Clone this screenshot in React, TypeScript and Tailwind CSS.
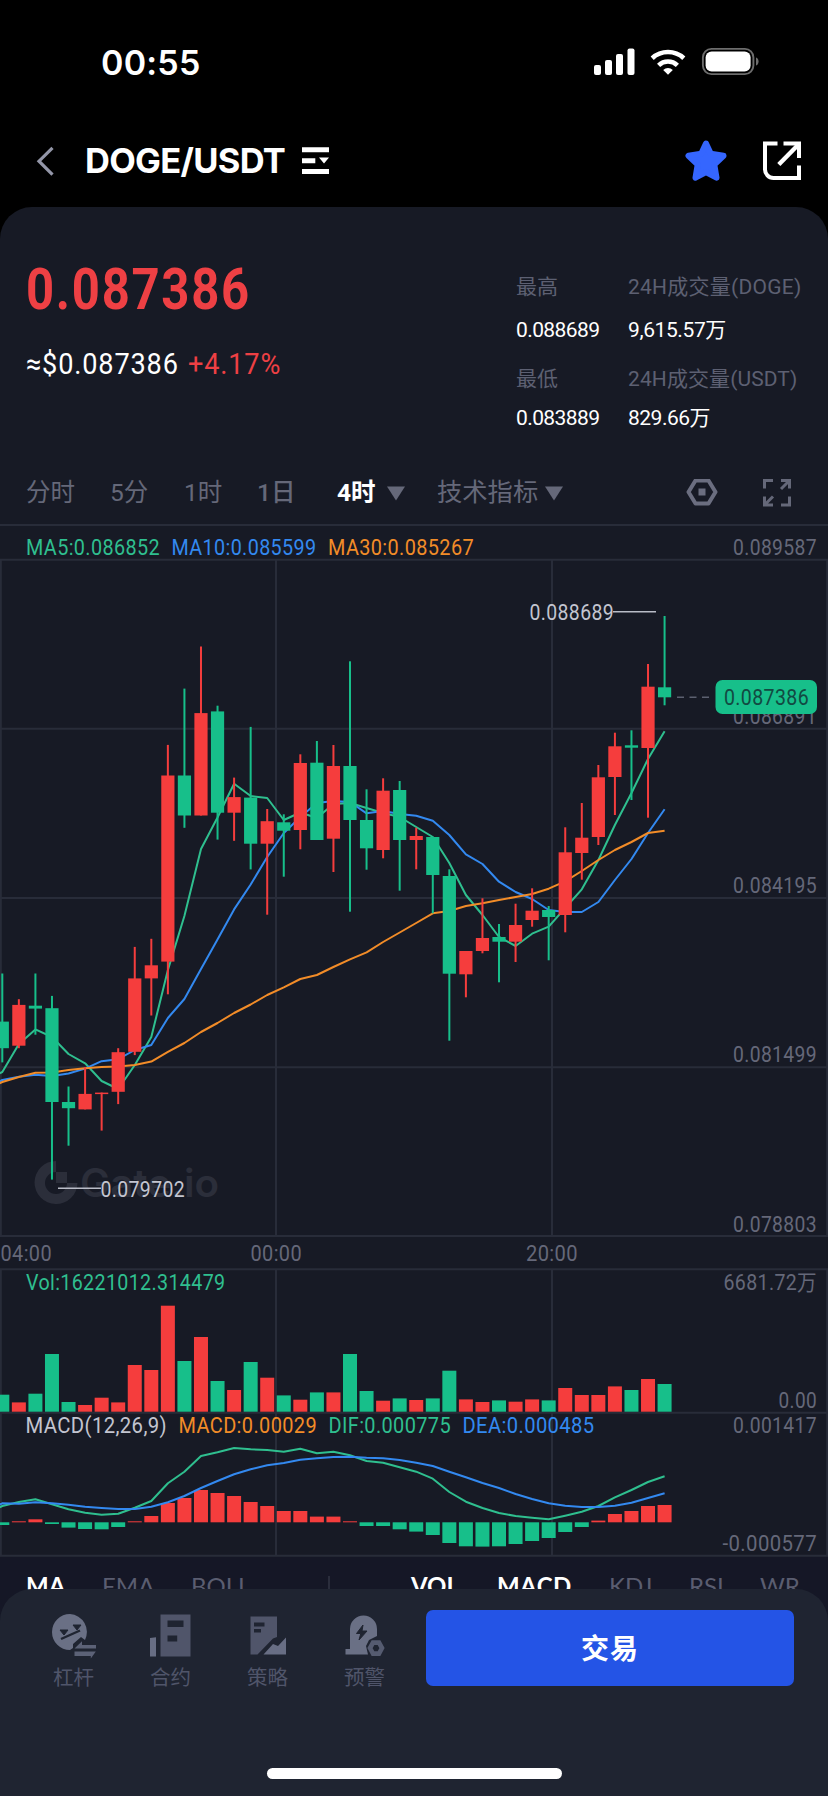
import React from "react";

const GREEN = "#17bf8a";
const RED = "#f53d3d";
const LINE_GREEN = "#2fbf8f";
const LINE_BLUE = "#3389f0";
const LINE_ORANGE = "#f28c28";
const GRID = "#282c39";
const MUTED = "#656879";

const STEP = 16.557;
const FIRST_X = 2.3;
const xAt = (i: number) => FIRST_X + i * STEP;

// [up, high, bodyTop, bodyBottom, low, volumeHeight, macd]
type Candle = [0 | 1, number, number, number, number, number, number];

// up = 1 is drawn in red
const candles: Candle[] = [
    [0, 373.5, 421.6, 448.2, 462.4, 17, -2.7],
    [1, 399.2, 404.9, 445.7, 448.2, 9.3, 1],
    [0, 373.5, 405.7, 408.6, 434.7, 18, 3],
    [0, 395.9, 408.2, 502, 579.6, 57.7, -1.7],
    [0, 486.5, 502, 508.2, 545.7, 9.7, -5.3],
    [1, 467.3, 493.9, 509.4, 509.4, 6.7, -6.7],
    [1, 492.6, 492.6, 493.9, 530.6, 14, -7],
    [1, 448.2, 452.2, 491.8, 504.1, 9.3, -4.7],
    [1, 346.9, 378.4, 451.8, 455.1, 46.7, 1],
    [1, 338.8, 365.3, 378.4, 415.5, 41.7, 6.3],
    [1, 144.9, 175.5, 361.6, 394.3, 106, 19.3],
    [0, 88.6, 175.5, 215.5, 227.8, 50.7, 24.3],
    [1, 46.5, 113.1, 215.5, 215.5, 74.7, 32.3],
    [0, 105.7, 111.4, 212.7, 239.6, 30.7, 29.3],
    [1, 177.6, 197.1, 212.7, 240.8, 21.7, 26.3],
    [0, 126.9, 197.6, 243.7, 269.4, 49.7, 20.3],
    [1, 209, 221.2, 243.7, 314.7, 34, 16.3],
    [0, 214.3, 222.3, 230.7, 276.7, 16.3, 11.3],
    [1, 154.3, 163, 230, 249.3, 12, 11.3],
    [0, 141, 162.7, 240, 240, 19.3, 5.7],
    [1, 145, 166, 238.7, 272, 19.3, 5.7],
    [0, 61.3, 166, 220, 311.7, 57.7, 1],
    [0, 189.3, 220, 248.3, 269.7, 20.7, -3.7],
    [1, 178.3, 190.7, 250, 258.3, 11, -3.7],
    [0, 181, 190, 240, 290.7, 13.3, -7],
    [1, 227.7, 236, 240, 269.3, 11.7, -9.3],
    [0, 236.7, 237, 275, 313.3, 13.3, -12.7],
    [0, 269.3, 276, 373.7, 440.7, 41, -20.7],
    [1, 351, 351, 374.3, 397.3, 12.3, -24],
    [1, 298.3, 338, 351, 353.3, 9.7, -24.3],
    [0, 324, 337, 341.7, 382.3, 11.3, -24],
    [1, 303.7, 325, 341.7, 362, 10, -21.7],
    [1, 288.3, 310.7, 320, 326.7, 12.3, -18.7],
    [0, 306, 310, 317, 360.3, 11.3, -15.7],
    [1, 227.3, 252.3, 315, 332.3, 23.7, -9.7],
    [1, 203, 237.7, 253, 279.7, 16.7, -4.7],
    [1, 165, 177.3, 237, 245, 16.7, 1.7],
    [1, 132.7, 146.3, 177, 215, 25.3, 8.3],
    [0, 130.3, 145.3, 147.7, 200, 21.7, 11.3],
    [1, 64, 86.7, 148, 217.7, 32.7, 16.3],
    [0, 16, 87.3, 97.3, 105.3, 27.7, 17.3],
];

const ma5 = [
    472, 444, 429.4, 437, 454, 463.3, 481, 489, 465, 437, 370, 316, 249, 217.5, 183.7, 196, 198, 220, 212.5, 218, 204,
    203, 208, 213, 217, 227, 237, 263, 295, 315, 337, 346, 333.7, 326.7, 308, 289.3, 260, 225, 193, 159, 131.3,
];
const ma10 = [
    480, 476.7, 474.7, 476, 473.5, 468.6, 461.2, 459.2, 450, 445, 418, 399, 369, 339.6, 309.4, 284.5, 257, 233, 217, 203,
    201, 202, 213.3, 211, 214, 215.7, 220.7, 235, 254.3, 264, 281.7, 292, 299, 310, 312, 312, 302, 280, 259, 233, 209.3,
];
const ma30 = [
    482, 477, 472.7, 472.5, 470, 468.2, 467, 466.5, 465, 461.6, 451.8, 443, 432, 423, 413, 404.5, 395, 387.3, 379, 375,
    367, 359.3, 352.3, 342, 332.5, 323, 313.3, 311, 306, 303.3, 300, 297, 294, 288.7, 281.3, 271, 260, 250, 242, 233,
    230.7,
];
const dif = [
    286, 282, 279.3, 284.3, 289.3, 292.7, 294.7, 293.7, 287.7, 281, 263.3, 251.7, 236, 232.3, 228, 229.3, 230, 231.7,
    228.7, 233.3, 231.7, 235.3, 241, 242.7, 247.3, 251.7, 258.7, 272, 281.7, 288, 293, 296, 297.7, 299.3, 295.7, 291.7,
    286, 277.3, 270, 262, 256.3,
];
const dea = [
    283.3, 283.7, 282.3, 283.3, 284.7, 286.7, 288, 289, 289, 286.7, 282.3, 276, 268, 261, 254.3, 249.3, 245.3, 243,
    239.7, 238.3, 237, 236.7, 237.7, 238.3, 240, 242.7, 246, 251.7, 257.3, 263, 268, 274, 279, 283.3, 285.7, 287, 287,
    285.7, 282.7, 278, 273.3,
];

const toPoints = (values: number[], offset: number) =>
    [`-4,${values[0] + offset + 3}`, ...values.map((v, i) => `${xAt(i).toFixed(1)},${(v + offset).toFixed(1)}`)].join(" ");

type LabelProps = {
    x: number;
    y: number;
    w: number;
    fill?: string;
    children: string;
};

function Label({ x, y, w, fill = MUTED, children }: LabelProps) {
    return (
        <text
            x={x}
            y={y}
            textLength={w}
            lengthAdjust="spacingAndGlyphs"
            fill={fill}
            className="text-[21.5px] tracking-[0.4px] [font-family:Roboto,'Noto_Sans_CJK_SC',sans-serif]"
        >
            {children}
        </text>
    );
}

function Chart() {
    return (
        <svg width="828" height="1033" viewBox="0 524 828 1033" className="block shrink-0">
            {/* Grid */}
            <g stroke={GRID} strokeWidth="2">
                {[525, 559.7, 728.7, 898, 1067.3, 1236, 1269.3, 1412.7, 1555.8].map((y) => (
                    <line key={y} x1="0" x2="828" y1={y} y2={y} />
                ))}
                {[0.8, 276, 552, 827.2].map((x) => (
                    <path key={x} d={`M${x} 560V1236M${x} 1269V1556`} />
                ))}
            </g>

            {/* Watermark */}
            <g fill="#2b2e3a">
                <path d="M56 1161a21.5 21.5 0 1 0 21.5 22H67a11 11 0 1 1-11-11z" />
                <path d="M56 1172h11v11H56z" />
                <text
                    x="80"
                    y="1197"
                    textLength="139"
                    lengthAdjust="spacingAndGlyphs"
                    className="text-[39px] font-semibold [font-family:Inter,sans-serif]"
                >
                    Gate.io
                </text>
            </g>

            {/* Right axis, the badge covers part of the second value */}
            <Label x={733} y={554.5} w={84}>0.089587</Label>
            <Label x={733} y={723.7} w={84}>0.086891</Label>
            <Label x={733} y={892.7} w={84}>0.084195</Label>
            <Label x={733} y={1062} w={84}>0.081499</Label>
            <Label x={733} y={1231.7} w={84}>0.078803</Label>
            <Label x={723.5} y={1290} w={93.5}>6681.72万</Label>
            <Label x={778.5} y={1408} w={38.5}>0.00</Label>
            <Label x={733} y={1433.3} w={84}>0.001417</Label>
            <Label x={722.5} y={1551} w={94.5}>-0.000577</Label>

            {/* Moving averages, under the candles */}
            <g fill="none" strokeWidth="2" strokeLinejoin="round">
                <polyline points={toPoints(ma5, 600)} stroke={LINE_GREEN} />
                <polyline points={toPoints(ma10, 600)} stroke={LINE_BLUE} />
                <polyline points={toPoints(ma30, 600)} stroke={LINE_ORANGE} />
            </g>

            {/* Candles */}
            {candles.map(([up, high, top, bottom, low], i) => (
                <g key={i} fill={up ? RED : GREEN}>
                    <rect x={xAt(i) - 1} y={600 + high} width="2" height={low - high} />
                    <rect x={xAt(i) - 6.6} y={600 + top} width="13.2" height={Math.max(bottom - top, 1.5)} />
                </g>
            ))}

            {/* Volume */}
            {candles.map(([up, , , , , volume], i) => (
                <rect
                    key={i}
                    x={xAt(i) - 7}
                    y={1411.7 - volume}
                    width="14"
                    height={volume}
                    fill={up ? RED : GREEN}
                />
            ))}

            {/* MACD */}
            {candles.map(([, , , , , , macd], i) => (
                <rect
                    key={i}
                    x={xAt(i) - 7}
                    y={macd > 0 ? 1522.3 - macd : 1522.3}
                    width="14"
                    height={Math.abs(macd)}
                    fill={macd > 0 ? RED : GREEN}
                />
            ))}
            <g fill="none" strokeWidth="2" strokeLinejoin="round">
                <polyline points={toPoints(dif, 1220)} stroke={LINE_GREEN} />
                <polyline points={toPoints(dea, 1220)} stroke={LINE_BLUE} />
            </g>

            {/* Legends */}
            <Label x={26} y={554.5} w={134} fill={LINE_GREEN}>MA5:0.086852</Label>
            <Label x={171.5} y={554.5} w={145} fill={LINE_BLUE}>MA10:0.085599</Label>
            <Label x={328} y={554.5} w={146} fill={LINE_ORANGE}>MA30:0.085267</Label>
            <Label x={26} y={1290} w={199.5} fill={LINE_GREEN}>Vol:16221012.314479</Label>
            <Label x={25.5} y={1433.3} w={141.5} fill="#c3c5d0">MACD(12,26,9)</Label>
            <Label x={178.5} y={1433.3} w={138.5} fill={LINE_ORANGE}>MACD:0.00029</Label>
            <Label x={328.5} y={1433.3} w={122.5} fill={LINE_GREEN}>DIF:0.000775</Label>
            <Label x={462.5} y={1433.3} w={132} fill={LINE_BLUE}>DEA:0.000485</Label>

            {/* Time axis */}
            <Label x={0.5} y={1261} w={51.5}>04:00</Label>
            <Label x={250.5} y={1261} w={51.5}>00:00</Label>
            <Label x={526} y={1261} w={52}>20:00</Label>

            {/* Extremes */}
            <path d="M613 611.7h43M58 1188.3h43" stroke="#b9bcc7" strokeWidth="1.6" />
            <Label x={529.5} y={620} w={84.5} fill="#c3c5d0">0.088689</Label>
            <Label x={100.5} y={1197} w={84.5} fill="#c3c5d0">0.079702</Label>

            {/* Last price */}
            <path d="M677 697.3h34" stroke="#5c6070" strokeWidth="1.6" strokeDasharray="7 5.5" />
            <rect x="715.5" y="680" width="101.5" height="34" rx="7" fill={GREEN} />
            <Label x={724} y={704.8} w={85} fill="#124a42">0.087386</Label>
        </svg>
    );
}

function StatusBar() {
    return (
        <div className="flex h-[122px] shrink-0 items-start justify-between pl-[101px] pr-[69px] pt-[43px]">
            <span className="text-[34px] font-semibold leading-[40px] tracking-[0.2px] text-white [font-family:Inter,sans-serif]">
                00:55
            </span>
            <svg width="166" height="40" viewBox="0 1 166 40" fill="#fff">
                <rect x="1" y="23" width="7" height="10" rx="2" />
                <rect x="12" y="18" width="7" height="15" rx="2" />
                <rect x="23" y="12" width="7" height="21" rx="2" />
                <rect x="34.5" y="6.5" width="7" height="26.5" rx="2" />
                <path d="M75 32.8l-4.8-4.8a7 7 0 0 1 9.6 0z" />
                <g fill="none" stroke="#fff" strokeWidth="4.6">
                    <path d="M65.6 23.3a13.7 13.7 0 0 1 18.8 0" />
                    <path d="M59.2 16.2a23.4 23.4 0 0 1 31.6 0" />
                </g>
                <rect x="109.9" y="6.9" width="50.5" height="25.2" rx="8.5" fill="none" stroke="#6d6d6d" strokeWidth="1.9" />
                <rect x="112.6" y="9.6" width="45" height="19.8" rx="6" />
                <path d="M163 15.5c3.4 1 3.4 7 0 8z" fill="#6d6d6d" />
            </svg>
        </div>
    );
}

function Header() {
    return (
        <div className="flex h-[85px] shrink-0 items-start pl-[36px] pr-[27px] pt-[17px]">
            <svg width="20" height="44" viewBox="0 0 20 44" fill="none" stroke="#9396a8" strokeWidth="3.2">
                <path d="M16.5 8.8L3 22.2l13.5 13.4" />
            </svg>
            <h1 className="ml-[29px] w-[217px] whitespace-nowrap text-[34.5px] font-bold leading-[44px] tracking-[-0.7px] text-white [font-family:Inter,sans-serif]">
                DOGE/USDT
            </h1>
            <svg width="27" height="44" viewBox="0 0 27 44" fill="#fff">
                <path d="M0 8.2h27v5H0zM0 19.2h13.3v5H0zM0 30h27v5H0zM17 18.6h10l-5 6z" />
            </svg>
            <svg
                width="42"
                height="44"
                viewBox="0 0 42 44"
                className="ml-auto"
                fill="#3566ff"
                stroke="#3566ff"
                strokeWidth="6"
                strokeLinejoin="round"
            >
                <path d="M21 4.5l4.8 10.300 12.700 2-9.200 8.700 2.200 13.200-10.500-5.700-10.500 5.700 2.200-13.200-9.200-8.700 12.700-2z" />
            </svg>
            <svg width="38" height="44" viewBox="0 0 38 44" className="ml-[36px]" fill="none" stroke="#fff" strokeWidth="4">
                <path d="M14.5 4.500H2v26c0 4.500 3.500 8.500 8.500 8.500H36V26.500" />
                <path d="M20.500 4.500H36V19" />
                <path d="M35.500 5.500L15.800 25.500" strokeWidth="4.400" />
            </svg>
        </div>
    );
}

function Price() {
    return (
        <div className="flex h-[248px] justify-between pl-[26px] [font-family:Roboto,'Noto_Sans_CJK_SC',sans-serif]">
            <div className="pt-[54px]">
                <div className="w-fit origin-left scale-x-[0.86] text-[57px] font-bold leading-[58px] tracking-[2px] text-[#ee4044]">
                    0.087386
                </div>
                <div className="mt-[27px] flex gap-[11px] whitespace-nowrap text-[29.5px] leading-[36px]">
                    <span className="w-[151px]">
                        <span className="inline-block origin-left scale-x-[0.92] tracking-[0.9px] text-white">≈$0.087386</span>
                    </span>
                    <span className="origin-left scale-x-[0.92] tracking-[0.9px] text-[#ee4044]">+4.17%</span>
                </div>
            </div>
            <div className="grid w-[312px] grid-cols-[112px_1fr] content-start whitespace-nowrap pt-[68px] text-[21px] leading-[24px] text-white">
                <span className="text-[#5d6072]">最高</span>
                <span className="tracking-[0.25px] text-[#5d6072]">24H成交量(DOGE)</span>
                <span className="mt-[19px] tracking-[-0.6px]">0.088689</span>
                <span className="mt-[19px] tracking-[-0.4px]">9,615.57万</span>
                <span className="mt-[25px] text-[#5d6072]">最低</span>
                <span className="mt-[25px] tracking-[0.1px] text-[#5d6072]">24H成交量(USDT)</span>
                <span className="mt-[15px] tracking-[-0.6px]">0.083889</span>
                <span className="mt-[15px] tracking-[-0.5px]">829.66万</span>
            </div>
        </div>
    );
}

function Caret() {
    return (
        <svg width="18" height="15" viewBox="0 0 18 15" fill="#656879">
            <path d="M0 .5h18L9 14.500z" />
        </svg>
    );
}

function Intervals() {
    return (
        <div className="flex h-[69px] items-center whitespace-nowrap pl-[26px] pt-[7px] text-[24.5px] text-[#656879] [font-family:Roboto,'Noto_Sans_CJK_SC',sans-serif]">
            <span className="w-[84px]">分时</span>
            <span className="w-[74px]">5分</span>
            <span className="w-[73px]">1时</span>
            <span className="w-[80px] font-medium">1日</span>
            <span className="w-[50px] font-bold text-white">4时</span>
            <Caret />
            <span className="ml-[32px] w-[108px] text-[25.3px]">技术指标</span>
            <Caret />
            <svg width="32" height="28" viewBox="0 1 32 28" className="ml-[123px]" fill="none" stroke="#6b6e80" strokeLinejoin="round">
                <path d="M9.500 2.500h13L29.500 14l-7 11.500h-13L2.500 14z" strokeWidth="4" />
                <rect x="12.500" y="10.500" width="7" height="7" fill="#6b6e80" stroke="none" />
            </svg>
            <svg width="28" height="28" viewBox="0 0.5 28 28" className="ml-[45px]" fill="none" stroke="#656879" strokeWidth="3">
                <path d="M1.500 10V2H10M18 2h8.500V10M26 2.500l-8 8M26.500 18v8.500H18M10 26.500H1.500V18M2 26l8-8" />
            </svg>
        </div>
    );
}

function Indicators() {
    return (
        <div className="flex h-[64px] items-start whitespace-nowrap bg-[#151726] pl-[26px] pt-[15px] text-[24px] leading-[28px] text-[#5a5d70] [font-family:Lato,sans-serif]">
            <span className="w-[76px] font-bold text-white">MA</span>
            <span className="w-[89px]">EMA</span>
            <span className="w-[137px]">BOLL</span>
            <span className="mt-1 h-5 w-[2px] bg-[#2a2d3c]" />
            <span className="ml-[81px] w-[86px] font-bold text-white">VOL</span>
            <span className="w-[112px] font-bold tracking-[0.4px] text-white">MACD</span>
            <span className="w-[80px]">KDJ</span>
            <span className="w-[71px]">RSI</span>
            <span>WR</span>
        </div>
    );
}

const navItems = [
    {
        label: "杠杆",
        icon: (
            <svg width="46" height="46" viewBox="0 0 46 46">
                <path d="M19 1a18 18 0 1 0 0 36l3-2v-4l8-7 4 3a18 18 0 0 0-15-26z" fill="#6a7085" />
                <path d="M9 17l4 5 4-5zM22 12l4 5 4-5z" fill="#1f2431" stroke="#1f2431" />
                <path d="M10 26l19-8.500" stroke="#1f2431" strokeWidth="2.400" />
                <path d="M23.500 35.500l7.500-7.300V32h14v3.500z" fill="#5c6277" />
                <path d="M23.500 38.500h21.300l-5 7V43H23.500z" fill="#5c6277" />
            </svg>
        ),
    },
    {
        label: "合约",
        icon: (
            <svg width="46" height="46" viewBox="0 0 46 46">
                <path d="M12.500 1.500h30v42h-30z" fill="#50556a" />
                <path d="M2 25l6-.7V43.500H2z" fill="#686e84" />
                <path d="M19.500 7.500h16V14h-16zM19.500 22.500h9.700v6h-9.700z" fill="#1f2431" />
            </svg>
        ),
    },
    {
        label: "策略",
        icon: (
            <svg width="46" height="46" viewBox="0 0 46 46">
                <path d="M5.500 3.500H32V24l-4 1.500L12.500 41.500h-7z" fill="#50556a" />
                <path d="M9 9.500h10.500v4H9zM9 16h7v3.500H9z" fill="#1f2431" />
                <path d="M18.500 41.500L28 31l5 2 8-8.500v17z" fill="#686e84" />
            </svg>
        ),
    },
    {
        label: "预警",
        icon: (
            <svg width="46" height="46" viewBox="0 0 46 46">
                <path d="M8 36V16a13.500 13.500 0 0 1 27 0v7l-8 4-3 6 2 8.500H3.500V36z" fill="#6a7085" />
                <path d="M21 12l-6.500 8.500h4.300L17 27l8-9h-5z" fill="#1f2431" stroke="#1f2431" />
                <path d="M31 29.600h6l3 5.500-3 5.500h-6l-3-5.500z" fill="none" stroke="#555b70" strokeWidth="4.600" />
            </svg>
        ),
    },
];

function BottomBar() {
    return (
        <div className="relative -mt-[32px] flex h-[207px] shrink-0 flex-col items-center rounded-t-[32px] bg-[#1f2431] [font-family:'Noto_Sans_CJK_SC',sans-serif]">
            <div className="flex w-full pl-[25px] pt-[21px]">
                {navItems.map(({ label, icon }) => (
                    <div key={label} className="flex w-[97px] flex-col items-center pt-[3px]">
                        {icon}
                        <span className="mt-[3px] text-[20.500px] leading-[28px] text-[#50556a]">{label}</span>
                    </div>
                ))}
                <button className="ml-[13px] h-[76px] w-[368px] rounded-[7px] bg-[#2454e6] pb-[2px] text-[28px] font-bold tracking-[1px] text-white">
                    交易
                </button>
            </div>
            <div className="mb-[17px] mt-auto h-[11px] w-[295px] rounded-full bg-white" />
        </div>
    );
}

export default function App() {
    return (
        <div className="flex h-[1796px] w-[828px] flex-col overflow-hidden bg-black">
            <StatusBar />
            <Header />
            <div className="flex shrink-0 flex-col rounded-t-[32px] bg-[#171a25]">
                <Price />
                <Intervals />
                <Chart />
                <Indicators />
            </div>
            <BottomBar />
        </div>
    );
}
